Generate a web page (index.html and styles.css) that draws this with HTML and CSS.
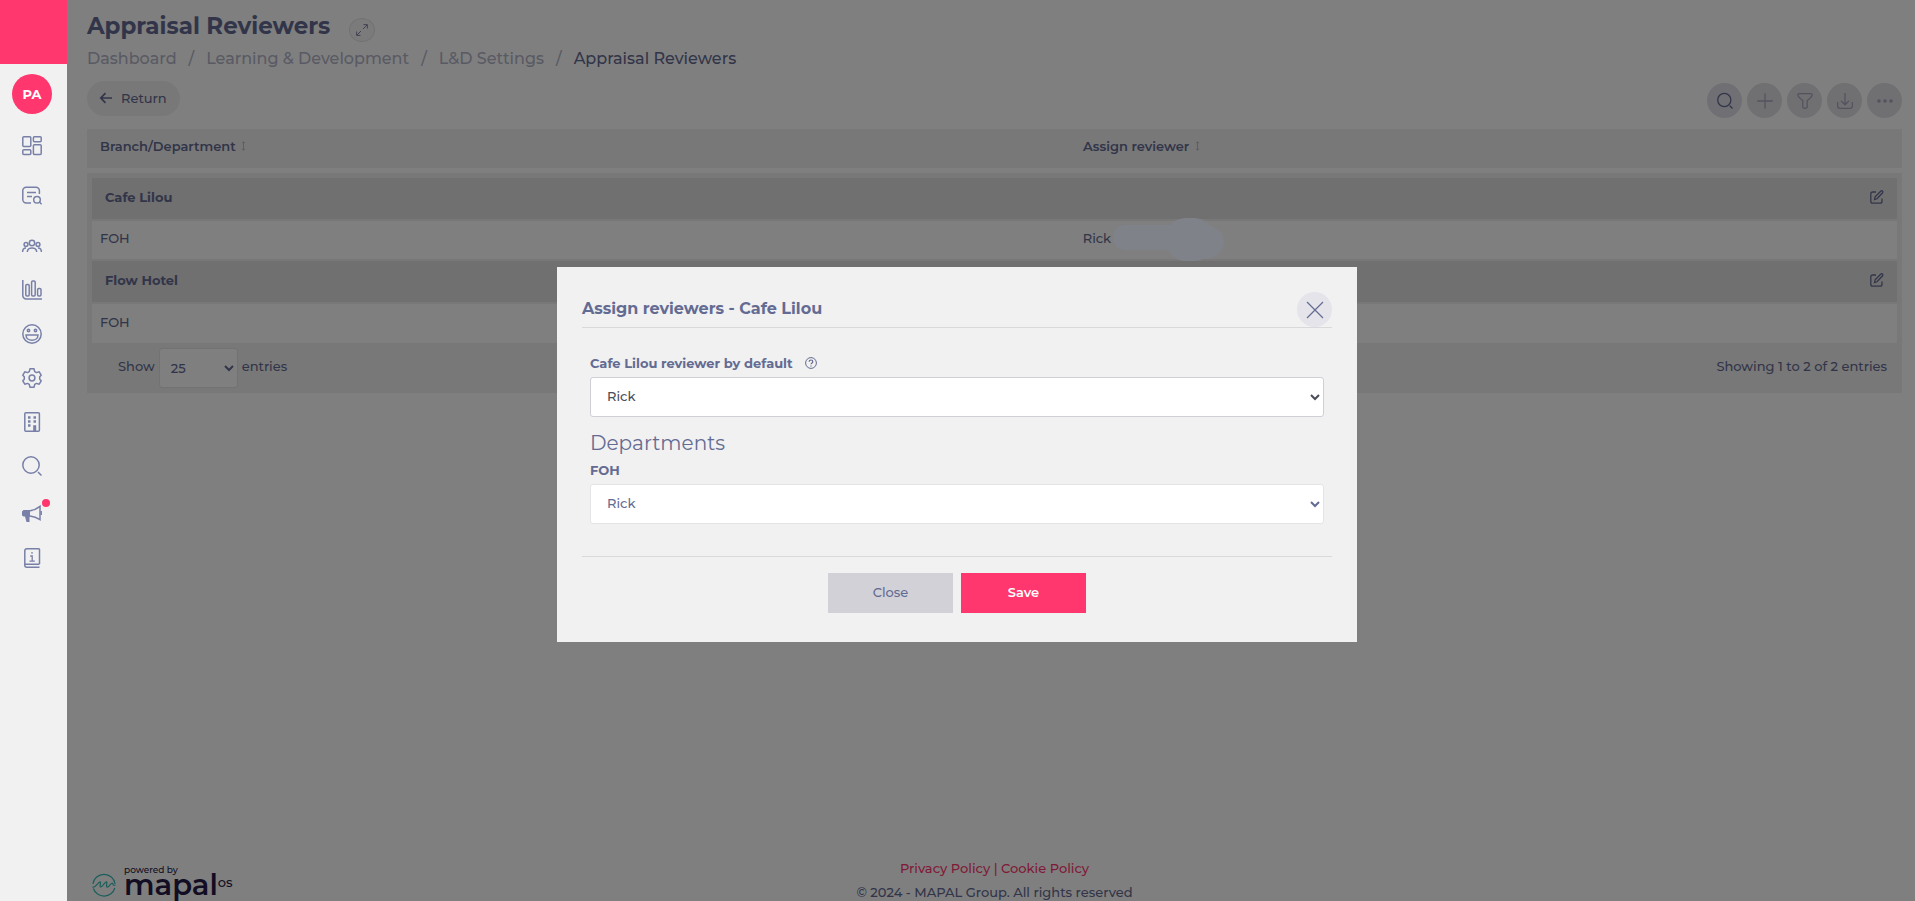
FILE: index.html
```html
<!DOCTYPE html>
<html lang="en">
<head>
<meta charset="utf-8">
<title>Appraisal Reviewers</title>
<link rel="stylesheet" href="styles.css">
</head>
<body>
<div class="layout">
  <nav class="sidebar" aria-label="Main">
    <div class="brand"></div>
    <a class="avatar" href="#">PA</a>
    <a class="nav-item spaced" href="#" aria-label="Dashboard"><svg viewBox="0 0 20 20"><rect x=".8" y=".8" width="8" height="9.8" rx="1"/><rect x="11.4" y=".8" width="7.8" height="5" rx="1"/><rect x=".8" y="13.8" width="8" height="4.8" rx="1"/><rect x="11.4" y="8.8" width="7.8" height="9.8" rx="1"/></svg></a>
    <a class="nav-item spaced" href="#" aria-label="Records"><svg viewBox="0 0 20 20"><path d="M9 17H4.2A3.4 3.4 0 0 1 .8 13.600V4.600A3.400 3.400 0 0 1 4.200 1.200H14a3.400 3.400 0 0 1 3.400 3.400V8M5 6.500h9M5 10.500h5"/><circle cx="15" cy="13.700" r="3.300"/><path d="m17.400 16 2.200 2.200"/></svg></a>
    <a class="nav-item" href="#" aria-label="People"><svg viewBox="0 0 20 20"><circle cx="10" cy="7" r="2.700"/><circle cx="4" cy="8.500" r="1.900"/><circle cx="16" cy="8.500" r="1.900"/><path d="M5.300 16c0-5.500 9.400-5.500 9.400 0M.6 16c0-2.300 1.200-4 3.400-4M19.400 16c0-2.300-1.200-4-3.400-4"/></svg></a>
    <a class="nav-item" href="#" aria-label="Reports"><svg viewBox="0 0 20 20"><path d="M.8 0v15.500A3.500 3.500 0 0 0 4.300 19H20"/><rect x="3.800" y="4.500" width="3.400" height="11.500" rx="1.200"/><rect x="9.600" y="1" width="3.600" height="15" rx="1.200"/><rect x="15.600" y="8.500" width="3.400" height="7.500" rx="1.200"/></svg></a>
    <a class="nav-item" href="#" aria-label="Engagement"><svg viewBox="0 0 20 20"><circle cx="10" cy="10" r="9.200"/><circle cx="6.500" cy="6.500" r="1.200"/><circle cx="13.500" cy="6.500" r="1.200"/><path d="M4 11h12c0 7-12 7-12 0z"/></svg></a>
    <a class="nav-item" href="#" aria-label="Settings"><svg viewBox="0 0 20 20"><path d="M8 .8h4l.7 2.800 1.800 1 2.700-.8 2 3.400-1.500 1.600v2.400l1.500 1.600-2 3.400-2.700-.8-1.800 1-.7 2.800H8l-.7-2.800-1.800-1-2.700.8-2-3.400 1.500-1.600V8.800L.8 7.200l2-3.400 2.700.8 1.800-1z" stroke-linejoin="round"/><circle cx="10" cy="10" r="2.900"/></svg></a>
    <a class="nav-item" href="#" aria-label="Company"><svg viewBox="0 0 20 20"><rect x="2.800" y=".8" width="14.600" height="18.400" rx="1"/><path d="M6 5.500h2.500M11.500 5.500H14M6 9.500h2.500M11.500 9.500H14M6 13.500h2.500" stroke-width="2.400"/><path d="M11.200 13.200h3V19h-3z" fill="currentColor" stroke="none"/></svg></a>
    <a class="nav-item" href="#" aria-label="Search"><svg viewBox="0 0 20 20"><circle cx="9" cy="9" r="8.200"/><path d="m16 16 3.500 3.500"/></svg></a>
    <a class="nav-item news" href="#" aria-label="News"><svg viewBox="0 0 20 20"><path d="M0 7.500 1.500 6H8v6.500l-.5 1v4.500H4.500L3 12.500H1.500L0 11.500z" fill="currentColor" stroke="none"/><path d="M8 6.800c4-.4 7-2 10-4.400v13.200c-3-2-6-3.200-10-3.600"/><path d="M19.200 7v4"/></svg><span class="dot"></span></a>
    <a class="nav-item" href="#" aria-label="Information"><svg viewBox="0 0 20 20"><path d="M17.500 16V1.500q0-.7-.7-.7H4.800a2 2 0 0 0-2 2v14.400a2 2 0 0 0 2 2h12.700M2.800 16.200h14.700"/><path d="M8.200 8H10.200v5M7.500 13.200h5.300M10 4v1.800" stroke-width="1.300"/></svg></a>
  </nav>

  <main class="main">
    <header class="title-row">
      <h1>Appraisal Reviewers</h1>
      <button class="expand" aria-label="Expand"><svg viewBox="0 0 12 12"><path d="M1 11 5 7M7 5l4-4M7.500.6h3.900v3.900M.6 7.500v3.900h3.900"/></svg></button>
    </header>
    <nav class="crumbs" aria-label="Breadcrumb">
      <a href="#">Dashboard</a><span>/</span><a href="#">Learning &amp; Development</a><span>/</span><a href="#">L&amp;D Settings</a><span>/</span><b>Appraisal Reviewers</b>
    </nav>
    <div class="actions">
      <button class="return"><svg viewBox="0 0 12 12"><path d="M12 6H1M5.500 1.200.8 6l4.700 4.800"/></svg>Return</button>
      <div class="tools">
        <button class="tool active" aria-label="Search"><svg viewBox="0 0 16 16"><circle cx="7.300" cy="7" r="6.600"/><path d="m12.800 12.800 2.700 2.700"/></svg></button>
        <button class="tool" aria-label="Add"><svg viewBox="0 0 16 16"><path d="M8 .2v15.600M.2 8h15.600"/></svg></button>
        <button class="tool" aria-label="Filter"><svg viewBox="0 0 16 16"><path d="M2.200.7h11.600q1.600 0 1.300 1.500c-.3 2.200-3.300 4-4.900 5.300v6.300q0 1.500-2.200 1.500t-2.200-1.500V7.500C4.200 6.200 1.200 4.400.9 2.200.6.7 2.200.7 2.200.7z"/></svg></button>
        <button class="tool" aria-label="Download"><svg viewBox="0 0 16 16"><path d="M8 0v11.500M4 7.800l4 4 4-4M.7 9v4q0 2.400 2.400 2.400h9.800q2.400 0 2.400-2.400V9"/></svg></button>
        <button class="tool" aria-label="More"><svg viewBox="0 0 16 16"><g fill="currentColor" stroke="none"><circle cx="2" cy="8" r="1.800"/><circle cx="8" cy="8" r="1.800"/><circle cx="14" cy="8" r="1.800"/></g></svg></button>
      </div>
    </div>

    <table class="head">
      <thead><tr>
        <th class="first">Branch/Department <svg class="sort" viewBox="0 0 5 10"><path d="M2.500 1v8M1 2.200 2.500.700 4 2.200M1 7.800l1.500 1.500L4 7.800"/></svg></th>
        <th>Assign reviewer <svg class="sort" viewBox="0 0 5 10"><path d="M2.500 1v8M1 2.200 2.500.700 4 2.200M1 7.800l1.500 1.500L4 7.800"/></svg></th>
      </tr></thead>
    </table>
    <section class="panel">
      <table class="rows">
        <tbody>
          <tr class="group"><th class="first" scope="rowgroup">Cafe Lilou</th><td class="edit"><button aria-label="Edit Cafe Lilou"><svg viewBox="0 0 14 14"><path d="M6 2H2.800Q.8 2 .8 4v7.200q0 2 2 2H10q2 0 2-2V8.500M4.500 9.600l.6-2.700L10.900 1q.8-.6 1.600.1t.1 1.700L7 8.800z"/></svg></button></td></tr>
          <tr><td class="first">FOH</td><td><span class="person">Rick<svg class="smudge" viewBox="0 0 111 44"><rect x="0" y="7" width="80" height="25" rx="12"/><rect x="53" y="0" width="48" height="43" rx="20"/><ellipse cx="91" cy="24" rx="20" ry="17"/></svg></span></td></tr>
          <tr class="group"><th class="first" scope="rowgroup">Flow Hotel</th><td class="edit"><button aria-label="Edit Flow Hotel"><svg viewBox="0 0 14 14"><path d="M6 2H2.800Q.8 2 .8 4v7.200q0 2 2 2H10q2 0 2-2V8.500M4.500 9.600l.6-2.700L10.900 1q.8-.6 1.600.1t.1 1.700L7 8.800z"/></svg></button></td></tr>
          <tr><td class="first">FOH</td><td></td></tr>
        </tbody>
      </table>
      <div class="pager">
        <label>Show <select><option>25</option></select> entries</label>
        <span>Showing 1 to 2 of 2 entries</span>
      </div>
    </section>

    <footer class="footer">
      <div class="logo">
        <svg viewBox="0 0 24 24"><path d="M.9 11A11.200 11.200 0 0 1 23.100 11M1.400 15.500A11.200 11.200 0 0 0 22.800 15M.5 14c3 1.500 5.500-5 7.500-5.200 1.500 0-1 5.200.7 5.200 2 0 4-5.200 5.600-5.200s-1 5.400.9 5.400c2 0 3.500-4.200 5-4.200 1.500.2-.2 3.200 3.300 2"/></svg>
        <div class="wordmark"><small>powered by</small><span>mapal<sup>os</sup></span></div>
      </div>
      <div class="legal">
        <div><a href="#">Privacy Policy</a> | <a href="#">Cookie Policy</a></div>
        <p>© 2024 - MAPAL Group. All rights reserved</p>
      </div>
    </footer>
  </main>
</div>

<div class="backdrop">
  <form class="modal" role="dialog" aria-labelledby="modal-title">
    <header>
      <h2 id="modal-title">Assign reviewers - Cafe Lilou</h2>
      <button type="button" class="close" aria-label="Close dialog"><svg viewBox="0 0 16 16"><path d="m0 0 16 16M16 0 0 16"/></svg></button>
    </header>
    <div class="fields">
      <div class="label-row">
        <label for="default-reviewer">Cafe Lilou reviewer by default</label>
        <svg viewBox="0 0 12 12"><circle cx="6" cy="6" r="5.400"/><path d="M4.200 4.700c0-2.300 3.600-2.200 3.600 0C7.800 6 6 5.800 6 7.300M6 8.400v1.200" stroke-width="1.200"/></svg>
      </div>
      <select id="default-reviewer" class="primary"><option>Rick</option></select>
      <h3>Departments</h3>
      <div class="label-row"><label for="foh-reviewer">FOH</label></div>
      <select id="foh-reviewer"><option>Rick</option></select>
    </div>
    <div class="buttons">
      <button type="button">Close</button>
      <button type="submit" class="save">Save</button>
    </div>
  </form>
</div>
</body>
</html>
```

FILE: styles.css
```css
* { box-sizing: border-box; }

body {
  margin: 0;
  background: #fff;
  color: #646b92;
  font: 500 13px/20px Montserrat, Inter, sans-serif;
  overflow: hidden;
}

h1, h2, h3, p { margin: 0; }
a { color: inherit; text-decoration: none; }
button, select { font: inherit; color: inherit; }
button { border: 0; padding: 0; background: none; }
svg { display: block; fill: none; stroke: currentColor; overflow: visible; }

.layout { display: flex; height: 100vh; }

/* Sidebar */
.sidebar {
  position: relative;
  z-index: 3;
  flex: 0 0 67px;
  display: flex;
  flex-direction: column;
  background: #f1f1f1;
  color: #7880a8;
}
.brand { height: 64px; background: #ff376e; }
.avatar {
  width: 40px;
  margin: 10px 12px;
  border-radius: 50%;
  background: #ff376e;
  color: #fff;
  font-weight: 700;
  line-height: 40px;
  text-align: center;
}
.nav-item {
  position: relative;
  display: flex;
  align-items: center;
  height: 44px;
  padding-left: 22px;
}
.nav-item svg { width: 20px; height: 20px; stroke-width: 1.5; }
.spaced { margin-bottom: 6px; }
.news { margin-top: 4px; }
.dot {
  position: absolute;
  left: 42px;
  top: 7px;
  width: 8px;
  height: 8px;
  border-radius: 50%;
  background: #ff376e;
}

/* Page */
.main {
  flex: 1;
  min-width: 0;
  display: flex;
  flex-direction: column;
  padding: 10px 13px 0 20px;
}
.title-row { display: flex; align-items: center; gap: 19px; height: 36px; }
h1 { font-size: 23px; line-height: 32px; font-weight: 700; padding-bottom: 4px; }
.expand {
  display: grid;
  place-items: center;
  width: 26px;
  height: 24px;
  margin-top: 4px;
  border: 1px solid #e4e4e4;
  border-radius: 50%;
  background: #f6f6f6;
}
.expand svg { width: 12px; height: 12px; stroke-width: .8; }
.crumbs { display: flex; gap: 12px; font-size: 16px; line-height: 26px; color: #b3b5c8; }
.crumbs b { font-weight: 500; color: #646b92; }
.actions { display: flex; justify-content: space-between; align-items: flex-end; height: 46px; }
.return {
  display: flex;
  align-items: center;
  gap: 9px;
  height: 35px;
  margin-bottom: 2px;
  padding: 0 13px 2px;
  border-radius: 18px;
  background: #f1f1f1;
}
.return svg { width: 12px; height: 12px; stroke-width: 1.7; }
.tools { display: flex; gap: 5px; }
.tool {
  display: grid;
  place-items: center;
  width: 35px;
  height: 35px;
  border-radius: 50%;
  background: #e1e1e5;
  color: #a6a7bf;
}
.tool.active { background: #dfdee9; color: #646b92; }
.tool svg { width: 16px; height: 16px; stroke-width: 1.3; }

table { width: 100%; table-layout: fixed; border-collapse: collapse; text-align: left; }
.head { margin-top: 11px; background: #f1f1f1; }
.head th { height: 39px; padding: 7px 13px 12px; font-weight: 600; }
.head .first { width: 54%; }
.head th + th { padding-left: 16px; }
.sort { display: inline-block; width: 5px; height: 10px; margin-left: 2px; color: #b9bacb; }

.panel { margin-top: 5px; padding: 5px 5px 0; background: #f1f1f1; }
.rows td, .rows th { height: 40px; padding: 0 8px 4px; background: #fff; }
.rows tr + tr { border-top: 2px solid #f1f1f1; }
.rows .first { width: 54%; }
.rows td + td { padding-left: 16px; }
.rows .group th, .rows .group td { height: 43px; padding: 0 13px 4px; background: #e0e0e0; font-weight: 700; }
.rows .group:first-child th, .rows .group:first-child td { height: 42px; }
.edit button { display: block; margin-left: auto; }
.edit svg { width: 14px; height: 14px; stroke-width: 1.3; }
.person { position: relative; }
.smudge {
  position: absolute;
  z-index: 2;
  left: 30px;
  top: -12px;
  width: 111px;
  height: 44px;
  fill: #808289;
  stroke: none;
}
.pager { display: flex; justify-content: space-between; align-items: center; height: 50px; padding: 0 10px 4px 26px; }
.pager label { display: flex; align-items: center; gap: 4px; }
.pager select { width: 79px; margin-top: 4px; }

select {
  height: 40px;
  padding: 0 0 0 7px;
  border: 1px solid #e4e4e7;
  border-radius: 3px;
  background: #fff;
}

/* Footer */
.footer {
  display: grid;
  grid-template-columns: 1fr auto 1fr;
  margin-top: auto;
  height: 45px;
}
.logo { display: flex; gap: 8px; padding: 8px 0 0 5px; }
.logo svg { width: 24px; height: 24px; margin-top: 9px; color: #35bdb5; stroke-width: 1.2; }
.wordmark { color: #271a47; }
.wordmark small { display: block; font-size: 9px; line-height: 12px; }
.wordmark span { display: block; font-size: 29px; line-height: 14px; font-weight: 600; }
.wordmark sup { font-size: 13px; line-height: 12px; font-weight: 500; vertical-align: 8px; }
.legal { text-align: center; line-height: 24px; color: #ff376e; }
.legal p { color: #646b92; }

/* Dialog */
.backdrop {
  position: fixed;
  inset: 0;
  z-index: 1;
  display: flex;
  align-items: center;
  justify-content: center;
  padding: 8px 1px 0 0;
  background: rgba(0, 0, 0, .5);
}
.modal {
  position: relative;
  z-index: 4;
  width: 800px;
  max-width: 90%;
  padding: 25px 25px 29px;
  background: #f1f1f1;
}
.modal header {
  display: flex;
  align-items: center;
  justify-content: space-between;
  border-bottom: 1px solid #d9d9dc;
}
h2 { font-size: 16px; line-height: 24px; font-weight: 700; padding-bottom: 2px; }
.close {
  display: grid;
  place-items: center;
  width: 35px;
  height: 35px;
  border-radius: 50%;
  background: #e5e4eb;
}
.close svg { width: 16px; height: 16px; stroke-width: 1.2; }
.fields { display: flex; flex-direction: column; padding: 25px 8px 32px; }
.label-row { display: flex; align-items: center; gap: 12px; height: 24px; padding-bottom: 4px; font-weight: 700; }
.label-row svg { width: 12px; height: 12px; }
.fields select { width: 100%; padding: 0 0 2px 12px; }
.fields .primary { border-color: #cfcfd5; color: #494c59; }
h3 { margin-top: 14px; font-size: 20px; line-height: 24px; font-weight: 400; }
h3 + .label-row { height: 29px; padding-bottom: 0; }
.buttons {
  display: flex;
  justify-content: center;
  gap: 8px;
  padding-top: 16px;
  border-top: 1px solid #d9d9dc;
}
.buttons button { width: 125px; height: 40px; padding-bottom: 3px; background: #d2d1d8; }
.buttons .save { background: #ff376e; color: #fff; font-weight: 600; }
```
